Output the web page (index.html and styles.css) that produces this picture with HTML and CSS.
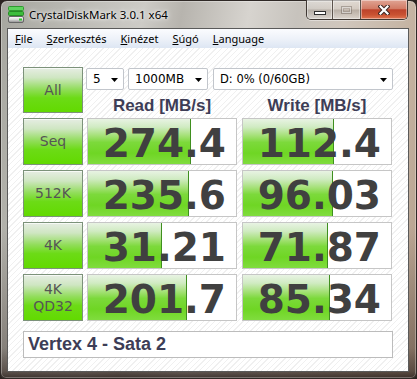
FILE: index.html
```html
<!DOCTYPE html>
<html lang="hu">
<head>
  <meta charset="UTF-8" />
  <meta name="viewport" content="width=device-width, initial-scale=1.0"/>
  <title>CrystalDiskMark 3.0.1 x64</title>
  <link rel="stylesheet" href="styles.css">
</head>
<body>

  <div class="window">

    <!-- Title bar -->
    <div class="titlebar">
      <svg class="app-icon" width="16" height="17" viewBox="0 0 16 17">
        <defs>
          <linearGradient id="drive" x1="0" y1="0" x2="0" y2="1">
            <stop offset="0" stop-color="#ffffff"/>
            <stop offset="0.5" stop-color="#d8d8d8"/>
            <stop offset="1" stop-color="#8a8a8a"/>
          </linearGradient>
        </defs>
        <rect x="0.5" y="0.5" width="15" height="4" rx="1" fill="#5fd35f" stroke="#2f9a2f"/>
        <rect x="0.5" y="5.5" width="15" height="4" rx="1" fill="#3cbc3c" stroke="#258a25"/>
        <rect x="0.5" y="10.5" width="15" height="6" rx="1.5" fill="url(#drive)" stroke="#666"/>
        <rect x="11" y="12.5" width="3" height="2" fill="#2ecc2e"/>
      </svg>
      <span class="title">CrystalDiskMark 3.0.1 x64</span>
      <div class="caption">
        <span class="cap-btn cap-min"><i></i></span>
        <span class="cap-btn cap-max"><i></i></span>
        <span class="cap-btn cap-close">
          <svg width="12" height="10" viewBox="0 0 12 10">
            <path d="M2.5 1.5 L9.5 8.5 M9.5 1.5 L2.5 8.5" stroke="#3b2622" stroke-width="4.2" stroke-linecap="square"/>
            <path d="M2.5 1.5 L9.5 8.5 M9.5 1.5 L2.5 8.5" stroke="#fff" stroke-width="2.2" stroke-linecap="square"/>
          </svg>
        </span>
      </div>
    </div>

    <div class="client">
      <!-- Menu -->
      <div class="menubar">
        <span class="menu-item"><u>F</u>ile</span>
        <span class="menu-item"><u>S</u>zerkesztés</span>
        <span class="menu-item"><u>K</u>inézet</span>
        <span class="menu-item"><u>S</u>úgó</span>
        <span class="menu-item"><u>L</u>anguage</span>
      </div>

      <div class="content">
        <div class="top">
          <button class="test-btn">All</button>
          <div class="settings">
            <div class="combos">
              <div class="combo combo-count">5<span class="arrow"></span></div>
              <div class="combo combo-size">1000MB<span class="arrow"></span></div>
              <div class="combo combo-drive">D: 0% (0/60GB)<span class="arrow"></span></div>
            </div>
            <div class="heads">
              <span>Read [MB/s]</span>
              <span>Write [MB/s]</span>
            </div>
          </div>
        </div>

        <div class="results">
          <div class="row">
            <button class="test-btn">Seq</button>
            <div class="cell"><div class="fill" style="width:103px"></div><span class="value">274.4</span></div>
            <div class="cell"><div class="fill" style="width:91px"></div><span class="value">112.4</span></div>
          </div>
          <div class="row">
            <button class="test-btn">512K</button>
            <div class="cell"><div class="fill" style="width:101px"></div><span class="value">235.6</span></div>
            <div class="cell"><div class="fill" style="width:90px"></div><span class="value">96.03</span></div>
          </div>
          <div class="row">
            <button class="test-btn">4K</button>
            <div class="cell"><div class="fill" style="width:74px"></div><span class="value">31.21</span></div>
            <div class="cell"><div class="fill" style="width:85px"></div><span class="value">71.87</span></div>
          </div>
          <div class="row">
            <button class="test-btn">4K<br>QD32</button>
            <div class="cell"><div class="fill" style="width:99px"></div><span class="value">201.7</span></div>
            <div class="cell"><div class="fill" style="width:87px"></div><span class="value">85.34</span></div>
          </div>
        </div>

        <div class="comment">Vertex 4 - Sata 2</div>
      </div>
    </div>

  </div>

</body>
</html>
```

FILE: styles.css
```css
* {
  box-sizing: border-box;
  margin: 0;
  padding: 0;
}

body {
  width: 417px;
  height: 379px;
  overflow: hidden;
  background-color: #2a2320;
  font-family: 'DejaVu Sans', sans-serif;
}

/* Aero glass frame */
.window {
  display: flex;
  flex-direction: column;
  width: 417px;
  height: 379px;
  padding: 0 7px 6px 6px;
  border: 1px solid #2f2926;
  border-radius: 7px 7px 6px 6px;
  background:
    linear-gradient(to top, rgba(40, 30, 26, 0.75) 0px, rgba(60, 48, 42, 0.5) 7px, rgba(0, 0, 0, 0) 30px),
    linear-gradient(to bottom, rgba(0, 0, 0, 0) 0%, rgba(0, 0, 0, 0) 60%, rgba(45, 32, 26, 0.45) 100%),
    linear-gradient(100deg, #a6a69f 0%, #bab9b3 15%, #cdcbc6 30%, #b7b4ae 38%, #d7d4cf 52%, #c7c3bd 62%, #d0c6bc 72%, #c3b19f 88%, #b29c88 100%);
  box-shadow: inset 0 0 0 1px rgba(255, 255, 255, 0.3);
}

.titlebar {
  display: flex;
  align-items: flex-start;
  height: 27px;
  padding: 0 1px;
}

.app-icon {
  margin-top: 5px;
  flex-shrink: 0;
}

.title {
  margin: 6px 0 0 5px;
  font-family: 'Noto Sans', sans-serif;
  font-size: 11.5px;
  line-height: 15px;
  color: #000;
  text-shadow: 0 0 6px rgba(255, 255, 255, 0.95), 0 0 3px rgba(255, 255, 255, 0.9);
}

/* Caption buttons */
.caption {
  display: flex;
  height: 20px;
  margin: -1px 0 0 auto;
  border: 1px solid #3f3833;
  border-top: none;
  border-radius: 0 0 5px 5px;
  overflow: hidden;
  box-shadow: 0 1px 0 rgba(255, 255, 255, 0.4);
}

.cap-btn {
  display: flex;
  align-items: center;
  justify-content: center;
  height: 100%;
  background: linear-gradient(rgba(255, 255, 255, 0.38), rgba(255, 255, 255, 0.12) 48%, rgba(70, 58, 48, 0.16) 52%, rgba(255, 255, 255, 0.25));
  box-shadow: inset 0 0 0 1px rgba(255, 255, 255, 0.4);
}

.cap-min {
  width: 26px;
  border-right: 1px solid #5c534c;
}

.cap-min i {
  width: 12px;
  height: 4px;
  margin-top: 6px;
  background: #fff;
  border: 1px solid #2e2e2e;
}

.cap-max {
  width: 28px;
  border-right: 1px solid #5c534c;
}

.cap-max i {
  width: 11px;
  height: 8px;
  margin-top: 1px;
  border: 1px solid rgba(80, 70, 60, 0.35);
  box-shadow: inset 0 0 0 1px rgba(255, 255, 255, 0.5), inset 0 0 0 2px rgba(80, 70, 60, 0.22);
}

.cap-close {
  width: 46px;
  background: linear-gradient(#e0a494 0%, #d27c66 45%, #bd432b 52%, #c95232 78%, #e07652 100%);
}

/* Client area */
.client {
  display: flex;
  flex-direction: column;
  flex: 1;
  border: 1px solid #5a5a5a;
  background: #fff;
}

.menubar {
  display: flex;
  height: 19px;
  background: linear-gradient(#fbfcfe, #eef2f9 50%, #dde6f3);
  font-family: 'Noto Sans', sans-serif;
  font-size: 11px;
  color: #000;
}

.menu-item {
  padding: 1px 7px 0 7px;
  line-height: 18px;
}

.menu-item u {
  text-decoration-thickness: 1px;
  text-underline-offset: 1px;
}

.content {
  flex: 1;
  padding: 19px 0 0 15px;
  background-color: #fff;
  background-image: repeating-linear-gradient(135deg, #ffffff 0 3px, #f0f0f0 3px 4px);
}

.top {
  display: flex;
  height: 46px;
}

.test-btn {
  display: flex;
  align-items: center;
  justify-content: center;
  width: 60px;
  height: 46px;
  flex-shrink: 0;
  border: 1px solid #7c927a;
  background: linear-gradient(#e6ede3 0%, #cfe6c2 22%, #92dd5c 48%, #6cdb16 68%, #62da00 100%);
  box-shadow: inset 0 1px 0 rgba(255, 255, 255, 0.7);
  font-family: 'DejaVu Sans', sans-serif;
  font-size: 14px;
  line-height: 17px;
  color: #555;
  text-align: center;
}

.settings {
  width: 307px;
  margin-left: 3px;
}

.combos {
  display: flex;
  gap: 4px;
  margin-top: 1px;
}

.combo {
  display: flex;
  height: 22px;
  padding: 2px 5px 0 6px;
  border: 1px solid #c2c6cc;
  border-radius: 2px;
  background: #fff;
  font-size: 12px;
  line-height: 16px;
  color: #000;
}

.combo-count { width: 38px; }
.combo-size { width: 80px; }
.combo-drive { width: 180px; margin-left: 1px; font-size: 11.5px; }

.arrow {
  width: 7px;
  height: 4px;
  margin: 7px 0 0 auto;
  background: #000;
  clip-path: polygon(0 0, 100% 0, 50% 100%);
}

.heads {
  display: flex;
  gap: 5px;
  margin-top: 6px;
  padding-left: 1px;
  font-family: 'Liberation Sans', sans-serif;
  font-weight: bold;
  font-size: 17px;
  line-height: 20px;
  color: #3d3d56;
}

.heads span {
  width: 150px;
  text-align: center;
}

/* Result rows */
.results {
  display: flex;
  flex-direction: column;
  gap: 5px;
  margin-top: 5px;
}

.row {
  display: flex;
  height: 47px;
}

.row .test-btn {
  height: 47px;
  margin-right: 4px;
}

.cell {
  position: relative;
  width: 150px;
  height: 47px;
  padding: 3px 10px 0 0;
  border: 1px solid #c6c6c6;
  background: #fff;
  text-align: right;
}

.cell + .cell {
  margin-left: 5px;
}

.fill {
  position: absolute;
  top: 0;
  left: 0;
  bottom: 0;
  border-right: 1px solid #3f8f1f;
  background: linear-gradient(#e8f3e3 0%, #d0ebc2 18%, #a2e073 38%, #7cd93b 52%, #6fd624 76%, #80dc3e 100%);
}

.value {
  position: relative;
  font-weight: bold;
  font-size: 39px;
  line-height: 44px;
  color: #404040;
}

.comment {
  width: 370px;
  height: 27px;
  margin-top: 10px;
  padding-left: 4px;
  border: 1px solid #bcbcbc;
  background: #fff;
  font-family: 'Liberation Sans', sans-serif;
  font-weight: bold;
  font-size: 18px;
  line-height: 25px;
  color: #3d3d56;
}
```
